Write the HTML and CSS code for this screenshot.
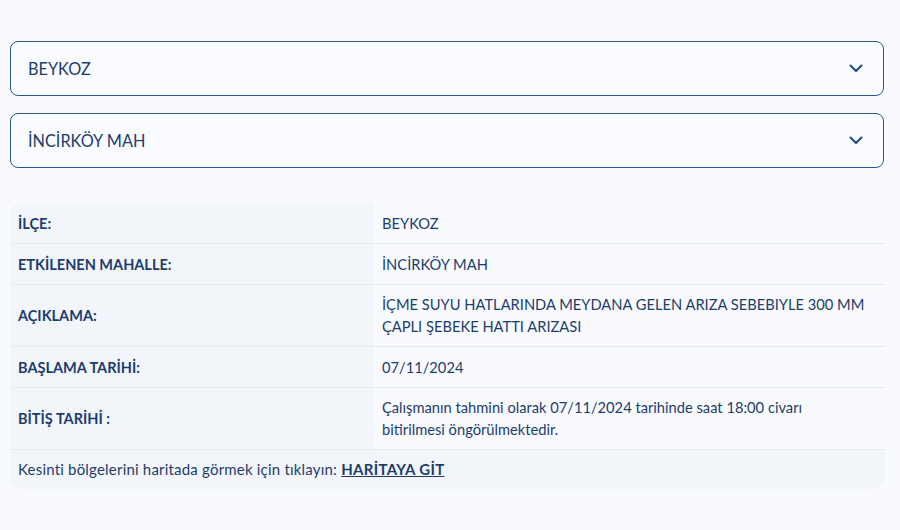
FILE: index.html
```html
<!DOCTYPE html>
<html lang="tr">
<head>
<meta charset="utf-8">
<link rel="stylesheet" href="styles.css">
</head>
<body>
<div class="wrap">
  <div class="select">
    <span>BEYKOZ</span>
    <svg class="chev" width="14" height="9" viewBox="0 0 14 9"><path d="M1.5 1.5 L7 7 L12.5 1.5" fill="none" stroke="#1d4a85" stroke-width="2" stroke-linecap="round" stroke-linejoin="round"/></svg>
  </div>
  <div class="select">
    <span>İNCİRKÖY MAH</span>
    <svg class="chev" width="14" height="9" viewBox="0 0 14 9"><path d="M1.5 1.5 L7 7 L12.5 1.5" fill="none" stroke="#1d4a85" stroke-width="2" stroke-linecap="round" stroke-linejoin="round"/></svg>
  </div>

  <div class="info">
    <div class="row"><div class="lbl">İLÇE:</div><div class="val">BEYKOZ</div></div>
    <div class="row"><div class="lbl">ETKİLENEN MAHALLE:</div><div class="val">İNCİRKÖY MAH</div></div>
    <div class="row"><div class="lbl">AÇIKLAMA:</div><div class="val">İÇME SUYU HATLARINDA MEYDANA GELEN ARIZA SEBEBIYLE 300 MM ÇAPLI ŞEBEKE HATTI ARIZASI</div></div>
    <div class="row"><div class="lbl">BAŞLAMA TARİHİ:</div><div class="val">07/11/2024</div></div>
    <div class="row"><div class="lbl">BİTİŞ TARİHİ :</div><div class="val">Çalışmanın tahmini olarak 07/11/2024 tarihinde saat 18:00 civarı bitirilmesi öngörülmektedir.</div></div>
    <div class="foot">Kesinti bölgelerini haritada görmek için tıklayın: <a href="#">HARİTAYA GİT</a></div>
  </div>
</div>
</body>
</html>
```
FILE: styles.css
```css
html, body {
  margin: 0;
  background: #f9fafd;
}
body {
  font-family: Lato, "Noto Sans", sans-serif;
  color: #1e3d6d;
}
.wrap {
  padding: 41px 16px 0 10px;
  display: flex;
  flex-direction: column;
}
.select {
  height: 53px;
  border: 1px solid #2f5692;
  border-radius: 8px;
  display: flex;
  align-items: center;
  justify-content: space-between;
  padding: 0 20px 0 17px;
  font-size: 16.3px;
  margin-bottom: 17px;
  background: #fafbfe;
}
.select + .select { margin-bottom: 35px; }
.chev { display: block; }
.info {
  border-radius: 12px;
  overflow: hidden;
  margin-right: -1px;
}
.row {
  display: grid;
  grid-template-columns: 364px 1fr;
  border-bottom: 1px solid #e6eaf0;
}
.lbl {
  background: #f2f5fa;
  font-weight: 700;
  font-size: 14.5px;
  padding: 10px 8px;
  display: flex;
  align-items: center;
  min-height: 20px;
}
.val {
  background: #f8fafd;
  font-size: 14.7px;
  padding: 8px 20px 9px 8px;
  line-height: 22px;
  display: flex;
  align-items: center;
}
.foot {
  background: #f2f5fa;
  padding: 9px 8px 10px;
  line-height: 20px;
  font-size: 15px;
  letter-spacing: 0.2px;
}
.foot a {
  color: #1e3d6d;
  font-weight: 700;
  font-size: 15px;
  letter-spacing: 0.3px;
  text-decoration: underline;
}
```
